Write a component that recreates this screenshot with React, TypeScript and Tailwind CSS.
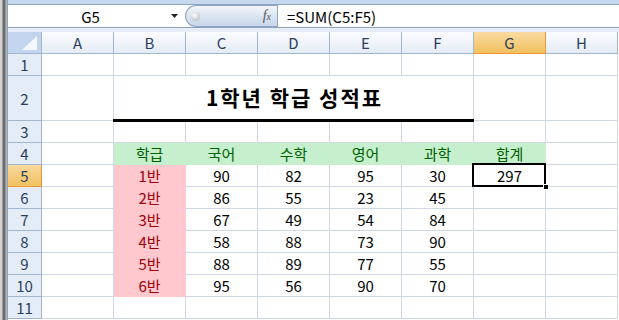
import React from 'react'

const cols = ['A', 'B', 'C', 'D', 'E', 'F', 'G', 'H']

// scores per class: 국어, 수학, 영어, 과학
const scores: [string, number, number, number, number][] = [
  ['1반', 90, 82, 95, 30],
  ['2반', 86, 55, 23, 45],
  ['3반', 67, 49, 54, 84],
  ['4반', 58, 88, 73, 90],
  ['5반', 88, 89, 77, 55],
  ['6반', 95, 56, 90, 70],
]

const subjects = ['학급', '국어', '수학', '영어', '과학', '합계']

const plain = 'flex items-center justify-center border-r border-b border-[#d0d7e5] text-[15px] leading-none text-black'
const green = 'flex items-center justify-center border-r border-b border-[#c6efce] bg-[#c6efce] text-[15px] leading-none text-[#006100]'
const pink = 'flex items-center justify-center border-r border-b border-[#ffc7ce] bg-[#ffc7ce] text-[15px] leading-none text-[#9c0006]'

function RowHeader({ n }: { n: number }) {
  const active = n === 5
  return (
    <div
      className={
        active
          ? 'flex items-center justify-center border-r border-b border-[#f29536] bg-[linear-gradient(to_bottom,#f9d99f,#f1c15f)] text-[15px] leading-none text-[#2a3f5c]'
          : 'flex items-center justify-center border-r border-b border-[#9eb6ce] bg-[#e4ecf7] text-[15px] leading-none text-[#2a3f5c]'
      }
    >
      {n}
    </div>
  )
}

function cellsFor(r: number) {
  const out: React.ReactNode[] = []
  for (let c = 0; c < 8; c++) {
    const key = `${r}-${c}`
    if (r === 2) {
      if (c === 1) {
        out.push(
          <div
            key={key}
            className="relative col-span-5 flex items-end justify-center border-r border-b border-[#d0d7e5] pb-[12px] pl-[2px] text-[21px] font-bold leading-none tracking-[2px] text-black"
          >
            1학년 학급 성적표
            <div className="absolute left-[-1px] right-[-1px] bottom-[-2px] h-[3px] bg-black" />
          </div>
        )
      } else if (c > 1 && c < 6) {
        continue
      } else {
        out.push(<div key={key} className={plain} />)
      }
      continue
    }
    if (r === 4 && c >= 1 && c <= 6) {
      out.push(<div key={key} className={green}>{subjects[c - 1]}</div>)
      continue
    }
    if (r >= 5 && r <= 10 && c === 1) {
      out.push(<div key={key} className={pink}>{scores[r - 5][0]}</div>)
      continue
    }
    if (r >= 5 && r <= 10 && c >= 2 && c <= 5) {
      out.push(<div key={key} className={plain}>{scores[r - 5][c - 1]}</div>)
      continue
    }
    if (r === 5 && c === 6) {
      out.push(
        <div key={key} className={'relative ' + plain}>
          297
          <div className="absolute left-[-2px] top-[-2px] h-[24px] w-[74px] border-2 border-black" />
          <div className="absolute right-[-4px] bottom-[-4px] h-[6px] w-[6px] border border-white bg-black" />
        </div>
      )
      continue
    }
    out.push(<div key={key} className={plain} />)
  }
  return out
}

export default function App() {
  const rows = Array.from({ length: 11 }, (_, i) => i + 1)

  return (
    <div className="flex h-[320px] w-[619px] overflow-hidden bg-white font-['Noto_Sans_CJK_KR',sans-serif]">
      {/* window frame strip */}
      <div className="w-[8px] shrink-0 border-r border-[#8ba2bf] bg-[linear-gradient(to_right,#d2d2d2_0px,#d2d2d2_2px,#6c6c6c_3px,#6c6c6c_5px,#b8b8b8_6px)]" />

      <div className="flex flex-1 flex-col">
        <div className="h-[4px] shrink-0 bg-[#c5d8ef]" />
        <div className="flex h-[24px] shrink-0 border-t border-b border-[#8ca3c2] bg-white">
          {/* name box */}
          <div className="relative flex w-[177px] items-center justify-center text-[15px] leading-none text-black">
            <span className="mr-[12px]">G5</span>
            <svg className="absolute right-[6px] top-[9px]" width="8" height="5" viewBox="0 0 8 5">
              <path d="M0 0h7L3.5 4z" fill="#222" />
            </svg>
          </div>
          {/* fx pill */}
          <div className="flex w-[92px] items-center justify-between rounded-l-full border border-r-0 border-[#8ea4c1] bg-[linear-gradient(to_bottom,#f4f7fb,#d9e3f1_55%,#c9d6ea)] pl-[5px] pr-[6px]">
            <div className="h-[9px] w-[9px] rounded-full bg-[radial-gradient(circle_at_40%_35%,#ffffff,#a9b0ba)]" />
            <span className="font-['Liberation_Serif',serif] text-[14px] italic leading-none text-[#555]">
              f<span className="text-[10px]">x</span>
            </span>
          </div>
          <div className="flex flex-1 items-center border-l border-[#8ea4c1] pl-[9px] text-[15px] leading-none text-black">
            =SUM(C5:F5)
          </div>
        </div>
        <div className="h-[4px] shrink-0 bg-[#e6edf6]" />

        <div className="grid shrink-0 grid-cols-[34px_repeat(8,72px)] grid-rows-[22px_22px_45px_repeat(9,22px)]">
          {/* corner */}
          <div className="relative border-r border-b border-[#9eb6ce] bg-[#c3d5ee]">
            <svg className="absolute right-[4px] bottom-[3px]" width="15" height="14" viewBox="0 0 15 14">
              <path d="M15 0V14H0z" fill="#f4f7fb" />
            </svg>
          </div>
          {cols.map((c) =>
            c === 'G' ? (
              <div
                key={c}
                className="flex items-center justify-center border-r border-b border-[#f29536] bg-[linear-gradient(to_bottom,#f9dba3,#f1c15f)] text-[15px] leading-none text-[#2a3f5c]"
              >
                {c}
              </div>
            ) : (
              <div
                key={c}
                className="flex items-center justify-center border-r border-b border-[#9eb6ce] bg-[linear-gradient(to_bottom,#fbfcfe,#e4ebf5)] text-[15px] leading-none text-[#2a3f5c]"
              >
                {c}
              </div>
            )
          )}

          {rows.map((r) => (
            <React.Fragment key={r}>
              <RowHeader n={r} />
              {cellsFor(r)}
            </React.Fragment>
          ))}
        </div>
      </div>
    </div>
  )
}
